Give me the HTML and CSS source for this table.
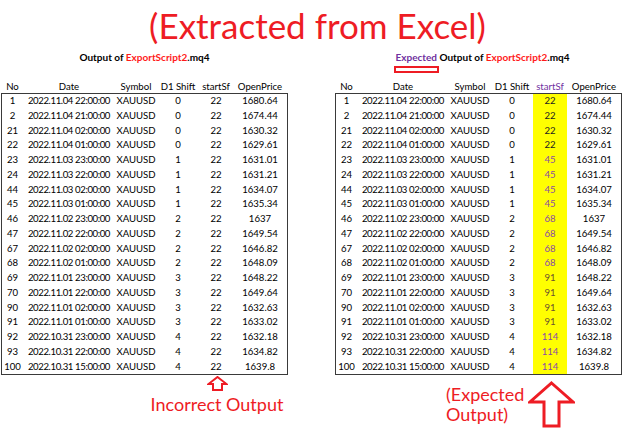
FILE: index.html
```html
<!DOCTYPE html>
<html>
<head>
<meta charset="utf-8">
<link rel="stylesheet" href="styles.css">
</head>
<body>
<div class="page">
  <h1 class="title">(Extracted from Excel)</h1>
  <div class="panels">
    <section class="panel">
      <div class="subtitle">Output of <span class="red">ExportScript2</span>.mq4</div>
      <div class="row head">
        <span>No</span><span>Date</span><span>Symbol</span><span>D1 Shift</span><span>startSf</span><span>OpenPrice</span>
      </div>
      <div class="tbl">
        <div class="row"><span>1</span><span class="d">2022.11.04 22:00:00</span><span>XAUUSD</span><span>0</span><span>22</span><span>1680.64</span></div>
        <div class="row"><span>2</span><span class="d">2022.11.04 21:00:00</span><span>XAUUSD</span><span>0</span><span>22</span><span>1674.44</span></div>
        <div class="row"><span>21</span><span class="d">2022.11.04 02:00:00</span><span>XAUUSD</span><span>0</span><span>22</span><span>1630.32</span></div>
        <div class="row"><span>22</span><span class="d">2022.11.04 01:00:00</span><span>XAUUSD</span><span>0</span><span>22</span><span>1629.61</span></div>
        <div class="row"><span>23</span><span class="d">2022.11.03 23:00:00</span><span>XAUUSD</span><span>1</span><span>22</span><span>1631.01</span></div>
        <div class="row"><span>24</span><span class="d">2022.11.03 22:00:00</span><span>XAUUSD</span><span>1</span><span>22</span><span>1631.21</span></div>
        <div class="row"><span>44</span><span class="d">2022.11.03 02:00:00</span><span>XAUUSD</span><span>1</span><span>22</span><span>1634.07</span></div>
        <div class="row"><span>45</span><span class="d">2022.11.03 01:00:00</span><span>XAUUSD</span><span>1</span><span>22</span><span>1635.34</span></div>
        <div class="row"><span>46</span><span class="d">2022.11.02 23:00:00</span><span>XAUUSD</span><span>2</span><span>22</span><span>1637</span></div>
        <div class="row"><span>47</span><span class="d">2022.11.02 22:00:00</span><span>XAUUSD</span><span>2</span><span>22</span><span>1649.54</span></div>
        <div class="row"><span>67</span><span class="d">2022.11.02 02:00:00</span><span>XAUUSD</span><span>2</span><span>22</span><span>1646.82</span></div>
        <div class="row"><span>68</span><span class="d">2022.11.02 01:00:00</span><span>XAUUSD</span><span>2</span><span>22</span><span>1648.09</span></div>
        <div class="row"><span>69</span><span class="d">2022.11.01 23:00:00</span><span>XAUUSD</span><span>3</span><span>22</span><span>1648.22</span></div>
        <div class="row"><span>70</span><span class="d">2022.11.01 22:00:00</span><span>XAUUSD</span><span>3</span><span>22</span><span>1649.64</span></div>
        <div class="row"><span>90</span><span class="d">2022.11.01 02:00:00</span><span>XAUUSD</span><span>3</span><span>22</span><span>1632.63</span></div>
        <div class="row"><span>91</span><span class="d">2022.11.01 01:00:00</span><span>XAUUSD</span><span>3</span><span>22</span><span>1633.02</span></div>
        <div class="row"><span>92</span><span class="d">2022.10.31 23:00:00</span><span>XAUUSD</span><span>4</span><span>22</span><span>1632.18</span></div>
        <div class="row"><span>93</span><span class="d">2022.10.31 22:00:00</span><span>XAUUSD</span><span>4</span><span>22</span><span>1634.82</span></div>
        <div class="row"><span>100</span><span class="d">2022.10.31 15:00:00</span><span>XAUUSD</span><span>4</span><span>22</span><span>1639.8</span></div>
      </div>
      <div class="cap-left">
        <svg class="arrow-small" width="21" height="15" viewBox="0 0 21 15"><path d="M10.5 1 L19.5 8 L15 8 L15 14 L6 14 L6 8 L1.5 8 Z" fill="#fff" stroke="#ee1c24" stroke-width="2" stroke-linejoin="miter"/></svg>
        <div class="cap-text">Incorrect Output</div>
      </div>
    </section>
    <section class="panel">
      <div class="subtitle"><span class="exp">Expected</span> Output of <span class="red">ExportScript2</span>.mq4</div>
      <div class="row head">
        <span>No</span><span>Date</span><span>Symbol</span><span>D1 Shift</span><span class="purple">startSf</span><span>OpenPrice</span>
      </div>
      <div class="tbl">
        <div class="row"><span>1</span><span class="d">2022.11.04 22:00:00</span><span>XAUUSD</span><span>0</span><span class="y">22</span><span>1680.64</span></div>
        <div class="row"><span>2</span><span class="d">2022.11.04 21:00:00</span><span>XAUUSD</span><span>0</span><span class="y">22</span><span>1674.44</span></div>
        <div class="row"><span>21</span><span class="d">2022.11.04 02:00:00</span><span>XAUUSD</span><span>0</span><span class="y">22</span><span>1630.32</span></div>
        <div class="row"><span>22</span><span class="d">2022.11.04 01:00:00</span><span>XAUUSD</span><span>0</span><span class="y">22</span><span>1629.61</span></div>
        <div class="row"><span>23</span><span class="d">2022.11.03 23:00:00</span><span>XAUUSD</span><span>1</span><span class="y p">45</span><span>1631.01</span></div>
        <div class="row"><span>24</span><span class="d">2022.11.03 22:00:00</span><span>XAUUSD</span><span>1</span><span class="y p">45</span><span>1631.21</span></div>
        <div class="row"><span>44</span><span class="d">2022.11.03 02:00:00</span><span>XAUUSD</span><span>1</span><span class="y p">45</span><span>1634.07</span></div>
        <div class="row"><span>45</span><span class="d">2022.11.03 01:00:00</span><span>XAUUSD</span><span>1</span><span class="y p">45</span><span>1635.34</span></div>
        <div class="row"><span>46</span><span class="d">2022.11.02 23:00:00</span><span>XAUUSD</span><span>2</span><span class="y p">68</span><span>1637</span></div>
        <div class="row"><span>47</span><span class="d">2022.11.02 22:00:00</span><span>XAUUSD</span><span>2</span><span class="y p">68</span><span>1649.54</span></div>
        <div class="row"><span>67</span><span class="d">2022.11.02 02:00:00</span><span>XAUUSD</span><span>2</span><span class="y p">68</span><span>1646.82</span></div>
        <div class="row"><span>68</span><span class="d">2022.11.02 01:00:00</span><span>XAUUSD</span><span>2</span><span class="y p">68</span><span>1648.09</span></div>
        <div class="row"><span>69</span><span class="d">2022.11.01 23:00:00</span><span>XAUUSD</span><span>3</span><span class="y o">91</span><span>1648.22</span></div>
        <div class="row"><span>70</span><span class="d">2022.11.01 22:00:00</span><span>XAUUSD</span><span>3</span><span class="y o">91</span><span>1649.64</span></div>
        <div class="row"><span>90</span><span class="d">2022.11.01 02:00:00</span><span>XAUUSD</span><span>3</span><span class="y o">91</span><span>1632.63</span></div>
        <div class="row"><span>91</span><span class="d">2022.11.01 01:00:00</span><span>XAUUSD</span><span>3</span><span class="y o">91</span><span>1633.02</span></div>
        <div class="row"><span>92</span><span class="d">2022.10.31 23:00:00</span><span>XAUUSD</span><span>4</span><span class="y p">114</span><span>1632.18</span></div>
        <div class="row"><span>93</span><span class="d">2022.10.31 22:00:00</span><span>XAUUSD</span><span>4</span><span class="y p">114</span><span>1634.82</span></div>
        <div class="row"><span>100</span><span class="d">2022.10.31 15:00:00</span><span>XAUUSD</span><span>4</span><span class="y p">114</span><span>1639.8</span></div>
      </div>
      <div class="cap-right">
        <div class="cap-text two">(Expected<br>Output)</div>
        <svg class="arrow-big" width="47" height="47" viewBox="0 0 47 47"><path d="M23.5 2 L45 21 L31 21 L31 45 L16 45 L16 21 L2 21 Z" fill="#fff" stroke="#ee1c24" stroke-width="3" stroke-linejoin="miter"/></svg>
      </div>
    </section>
  </div>
</div>
</body>
</html>
```
FILE: styles.css
```css
html, body {
  margin: 0;
  padding: 0;
  background: #ffffff;
}
body {
  font-family: Lato, "Open Sans", sans-serif;
  color: #000000;
  width: 625px;
  height: 429px;
  overflow: hidden;
}
.page {
  display: flex;
  flex-direction: column;
}
.title {
  margin: 0;
  height: 48px;
  line-height: 50px;
  font-size: 35px;
  font-weight: 400;
  color: #ee1c24;
  text-align: center;
  padding-left: 10px;
}
.panels {
  display: flex;
  gap: 47px;
  padding-left: 1px;
}
.panel {
  width: 287px;
  display: flex;
  flex-direction: column;
}
.subtitle {
  margin-top: 2px;
  height: 14px;
  line-height: 14px;
  font-size: 10px;
  font-weight: 700;
  text-align: center;
  color: #000;
}
.panel + .panel .subtitle {
  padding-left: 8px;
}
.red {
  color: #ff1a1a;
}
.exp {
  color: #7030a0;
  position: relative;
}
.exp::after {
  content: "";
  position: absolute;
  left: -1px;
  right: -2px;
  top: 15px;
  height: 3px;
  border: 2px solid #ee1c24;
  background: #fff;
}
.row {
  display: grid;
  grid-template-columns: 21px 92px 42px 42px 34px 1fr;
  font-size: 9.6px;
  text-align: center;
  white-space: nowrap;
}
.row.head {
  margin-top: 16px;
  line-height: 13px;
  padding: 0 1px;
}
.tbl {
  border: 1px solid #3a3a3a;
}
.tbl .row {
  line-height: 14.75px;
}
.d {
  letter-spacing: -0.4px;
}
.purple {
  color: #7030a0;
}
.y {
  background: #ffff00;
  color: #222;
}
.y.p {
  color: #8a4aa8;
}
.y.o {
  color: #6a5030;
}
.cap-left {
  width: 150px;
  margin-left: 141px;
  display: flex;
  flex-direction: column;
  align-items: center;
}
.arrow-small {
  margin-top: 1px;
  display: block;
}
.cap-text {
  font-size: 18px;
  line-height: 20px;
  color: #ee1c24;
}
.cap-left .cap-text {
  margin-top: 3px;
}
.cap-right {
  margin-left: 111px;
  margin-top: 6px;
  display: flex;
  align-items: flex-start;
  gap: 4px;
}
.cap-text.two {
  margin-top: 3px;
  width: 78px;
}
.arrow-big {
  display: block;
}
```
